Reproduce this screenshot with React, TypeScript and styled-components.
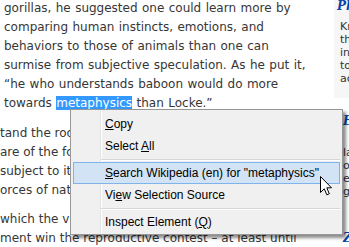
import React, { FC } from "react";
import styled, { createGlobalStyle } from "styled-components";

const GlobalStyle = createGlobalStyle`
  html, body {
    margin: 0;
    padding: 0;
    background: #ffffff;
    overflow: hidden;
  }
`;

interface MenuItemData {
  before: string;
  key: string;
  after: string;
  active?: boolean;
}

const menuGroups: MenuItemData[][] = [
  [
    { before: "", key: "C", after: "opy" },
    { before: "Select ", key: "A", after: "ll" },
  ],
  [
    { before: "", key: "S", after: 'earch Wikipedia (en) for "metaphysics"', active: true },
    { before: "Vi", key: "e", after: "w Selection Source" },
  ],
  [{ before: "Inspect Element (", key: "Q", after: ")" }],
];

const App: FC = () => {
  return (
    <>
      <GlobalStyle />
      <Page>
        <Article>
          <Para>
            gorillas, he suggested one could learn more by
            <br />
            comparing human instincts, emotions, and
            <br />
            behaviors to those of animals than one can
            <br />
            surmise from subjective speculation. As he put it,
            <br />
            “he who understands baboon would do more
            <br />
            towards <Selected>metaphysics</Selected> than Locke.”
          </Para>
          <ClippedPara>
            tand the roots of human nature we must
            <br />
            are of the forces that shaped it, and
            <br />
            subject to its laws, for we are products
            <br />
            orces of natural selection operating upon
          </ClippedPara>
          <ClippedPara>
            which the variation of the human
            <br />
            ment win the reproductive contest – at least until
          </ClippedPara>
        </Article>

        <Sidebar>
          <InfoBox>
            <SideTitle>Philosophy portal</SideTitle>
            <SideLines>
              <SideLine>Kropotkin, Darwin and</SideLine>
              <SideLine>the question of</SideLine>
              <SideLine>instinct, according</SideLine>
              <SideLine>to the modern</SideLine>
              <SideLine>account</SideLine>
            </SideLines>
          </InfoBox>
          <SideSection>
            <SideTitle>Economics</SideTitle>
            <SideMeta>
              <Star>★</Star> featured
            </SideMeta>
            <SideLine>law of nature</SideLine>
            <SideLine>ostensibly</SideLine>
            <SideLine>effects of</SideLine>
            <SideLine>global</SideLine>
          </SideSection>
          <BottomTitle>Zoology</BottomTitle>
        </Sidebar>

        <Menu>
          <Gutter />
          {menuGroups.map((group, gi) => (
            <React.Fragment key={gi}>
              {gi > 0 && <Separator />}
              {group.map((item) => (
                <MenuItem key={item.key} $active={item.active}>
                  {item.before}
                  <AccessKey>{item.key}</AccessKey>
                  {item.after}
                </MenuItem>
              ))}
            </React.Fragment>
          ))}
        </Menu>

        <Pointer width="13" height="21" viewBox="0 0 13 21">
          <path
            d="M0.5 0.5 L0.5 16.5 L4.3 12.8 L6.8 18.8 L9.3 17.8 L6.8 11.8 L11.5 11.8 Z"
            fill="#ffffff"
            stroke="#000000"
            strokeWidth="1"
            strokeLinejoin="miter"
          />
        </Pointer>
      </Page>
    </>
  );
};

export default App;

const Page = styled.div`
  position: relative;
  display: flex;
  width: 349px;
  height: 247px;
  overflow: hidden;
  background: #ffffff;
`;

const Article = styled.div`
  flex: none;
  width: 334px;
  overflow: hidden;
  padding-left: 4px;
  box-sizing: border-box;
  font-family: "DejaVu Sans", Verdana, sans-serif;
  font-size: 12px;
  line-height: 19px;
  color: #363636;
  white-space: nowrap;
`;

const Para = styled.p`
  margin: -1px 0 11px 0;
  word-spacing: 0.6px;
`;

const ClippedPara = styled.p`
  margin: 0 0 10px -4px;
`;

const Selected = styled.span`
  background: #3399ff;
  color: #ffffff;
  word-spacing: 0;
`;

const Sidebar = styled.div`
  flex: none;
  width: 200px;
  font-family: "DejaVu Sans", Verdana, sans-serif;
  font-size: 11px;
  color: #333333;
  white-space: nowrap;
`;

const InfoBox = styled.div`
  height: 98px;
  background: #f6f6f6;
  padding-left: 3px;
  box-sizing: border-box;
`;

const SideTitle = styled.div`
  font-family: "DejaVu Serif", "Liberation Serif", serif;
  font-style: italic;
  font-weight: bold;
  font-size: 12px;
  line-height: 13px;
  color: #0645ad;
`;

const SideLines = styled.div`
  margin-top: 7px;
  padding-left: 3px;
`;

const SideLine = styled.div`
  line-height: 13px;
`;

const SideSection = styled.div`
  margin-top: 17px;
  padding-left: 9px;
`;

const SideMeta = styled.div`
  margin: 5px 0 0 5px;
  line-height: 13px;
  color: #e08a1e;
`;

const Star = styled.span`
  color: #f0a030;
`;

const BottomTitle = styled(SideTitle)`
  margin-top: 34px;
  padding-left: 9px;
`;

const Menu = styled.div`
  position: absolute;
  left: 70px;
  top: 109px;
  width: 273px;
  box-sizing: border-box;
  padding: 3px 2px 1px 2px;
  background: #f0f0f0;
  border: 1px solid #979797;
  box-shadow: 3px 3px 3px rgba(0, 0, 0, 0.45);
  font-family: "Liberation Sans", Arial, sans-serif;
  font-size: 12px;
  color: #000000;
`;

const Gutter = styled.div`
  position: absolute;
  left: 29px;
  top: 0;
  bottom: 0;
  width: 1px;
  background: #e2e3e3;
  border-right: 1px solid #ffffff;
`;

const MenuItem = styled.div<{ $active?: boolean }>`
  position: relative;
  height: 22px;
  line-height: 20px;
  padding-left: 31px;
  box-sizing: border-box;
  border: 1px solid ${({ $active }) => ($active ? "#7eb4ea" : "transparent")};
  background: ${({ $active }) => ($active ? "#d1e3f5" : "transparent")};
  white-space: nowrap;
`;

const AccessKey = styled.span`
  text-decoration: underline;
`;

const Separator = styled.div`
  position: relative;
  height: 5px;
  margin-left: 28px;
  &::after {
    content: "";
    position: absolute;
    left: 0;
    right: 0;
    top: 2px;
    height: 1px;
    background: #d7d7d7;
    border-bottom: 1px solid #ffffff;
  }
`;

const Pointer = styled.svg`
  position: absolute;
  left: 320px;
  top: 176px;
`;
